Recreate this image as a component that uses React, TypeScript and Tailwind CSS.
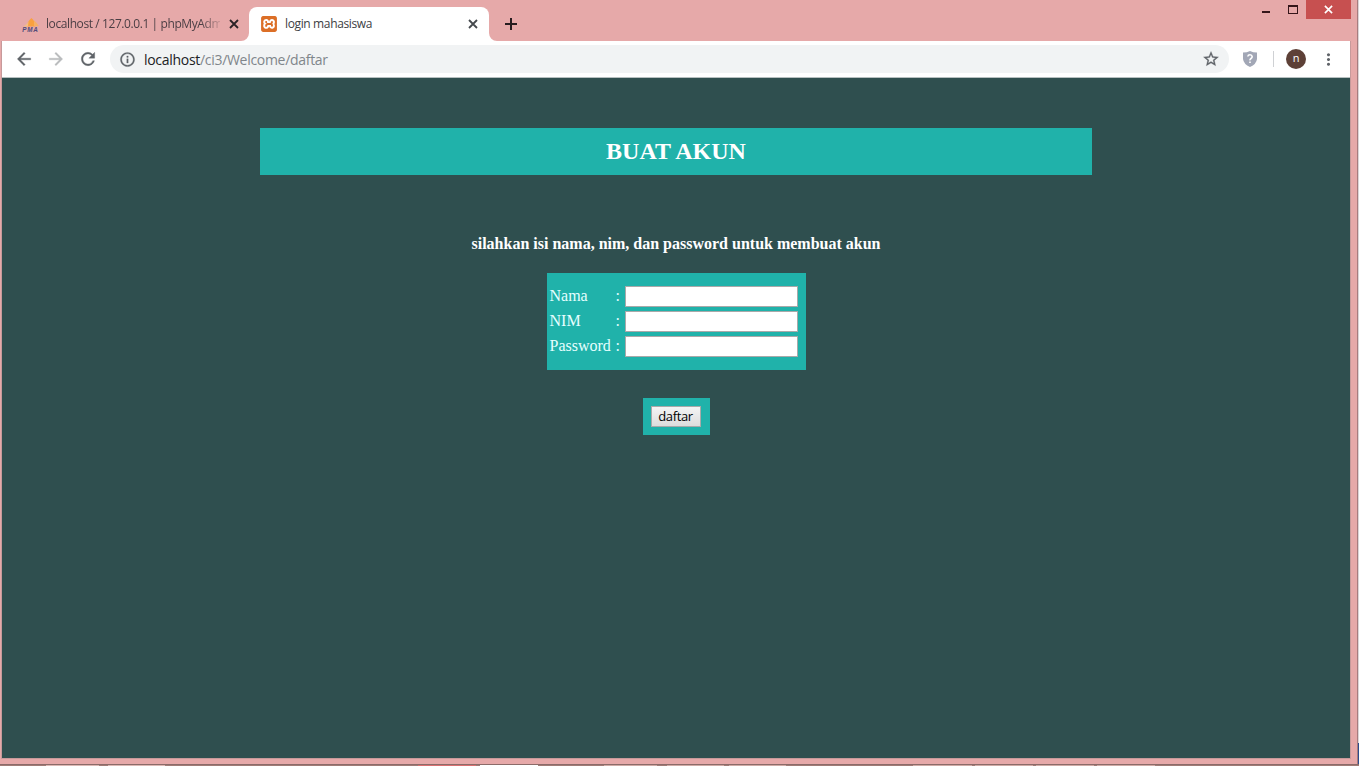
import { SiXampp } from "react-icons/si";
import { MdMoreVert } from "react-icons/md";

const glyphs = {
  back: "M20 11H7.83l5.59-5.59L12 4l-8 8 8 8 1.41-1.41L7.83 13H20v-2z",
  forward: "M12 4l-1.41 1.41L16.17 11H4v2h12.17l-5.58 5.59L12 20l8-8z",
  reload:
    "M17.65 6.35A7.958 7.958 0 0 0 12 4c-4.42 0-7.99 3.58-7.99 8s3.57 8 7.99 8c3.73 0 6.84-2.55 7.73-6h-2.08A5.99 5.99 0 0 1 12 18c-3.31 0-6-2.69-6-6s2.69-6 6-6c1.66 0 3.14.69 4.22 1.78L13 11h7V4l-2.35 2.35z",
  info: "M11 7h2v2h-2zm0 4h2v6h-2zm1-9C6.48 2 2 6.48 2 12s4.48 10 10 10 10-4.48 10-10S17.52 2 12 2zm0 18c-4.41 0-8-3.59-8-8s3.59-8 8-8 8 3.59 8 8-3.59 8-8 8z",
  star: "M22 9.24l-7.19-.62L12 2 9.19 8.63 2 9.24l5.46 4.73L5.82 21 12 17.27 18.18 21l-1.63-7.03L22 9.24zM12 15.4l-3.76 2.27 1-4.28-3.32-2.88 4.38-.38L12 6.1l1.71 4.04 4.38.38-3.32 2.88 1 4.28L12 15.4z",
};

function Glyph({ name, className }: { name: keyof typeof glyphs; className: string }) {
  return (
    <svg viewBox="0 0 24 24" className={className} fill="currentColor" stroke="currentColor" strokeWidth="0.4">
      <path d={glyphs[name]} />
    </svg>
  );
}

function CloseX({ className }: { className: string }) {
  return (
    <svg viewBox="0 0 10 10" className={className} fill="none" stroke="currentColor" strokeWidth="1.8">
      <path d="M1 1 9 9M9 1 1 9" />
    </svg>
  );
}

function PmaIcon() {
  return (
    <svg viewBox="0 0 17 16" className="h-4 w-[17px] shrink-0">
      <path d="M9.5 2C6.5 4.5 5 7.5 4.5 10.5H13C13.5 7 12 4 9.5 2Z" fill="#f9a13f" />
      <path d="M.8 10.5C3 9.8 5 8 6.5 5.5L6 10.5Z" fill="#f3bd86" />
      <path d="M12 4.5C14 6 15.7 8 16.8 10L12 10.5Z" fill="#f6b066" />
      <text x="0.3" y="16" fontFamily="Liberation Sans, sans-serif" fontSize="6.3" fontWeight="700" fontStyle="italic" fill="#4f4b78" textLength="15.5">PMA</text>
    </svg>
  );
}

function TitleBar() {
  return (
    <div className="flex h-[41px] items-start pl-[9px] text-[12px] text-[#4b3e44]">
      <div className="mt-[7px] flex h-[34px] w-[240px] items-center pl-[13px]">
        <PmaIcon />
        <span className="ml-[7px] w-[174px] overflow-hidden whitespace-nowrap tracking-[-0.41px] [mask-image:linear-gradient(to_right,black_155px,transparent_178px)]">
          localhost / 127.0.0.1 | phpMyAdmin
        </span>
        <CloseX className="ml-[9px] size-[10px] shrink-0 text-[#2b2226]" />
      </div>
      <div className="relative mt-[7px] flex h-[34px] w-[240px] items-center rounded-t-[8px] bg-white pl-3">
        <svg viewBox="0 0 8 8" className="absolute bottom-0 -left-2 size-2"><path d="M8 0V8H0A8 8 0 0 0 8 0" fill="white" /></svg>
        <svg viewBox="0 0 8 8" className="absolute -right-2 bottom-0 size-2"><path d="M0 0V8H8A8 8 0 0 1 0 0" fill="white" /></svg>
        <SiXampp className="size-4 rounded-[2px] text-[#dc6f27]" />
        <span className="ml-2 w-[176px] tracking-[-0.36px] text-[#3c4043]">login mahasiswa</span>
        <CloseX className="ml-[7px] size-[10px] text-[#45494d]" />
      </div>
      <svg viewBox="0 0 12 12" className="mt-[18px] ml-4 size-3" stroke="#271c1f" strokeWidth="2"><path d="M6 0V12M0 6H12" /></svg>
      <div className="ml-auto flex">
        <div className="mt-[11px] h-[2px] w-2 bg-[#35161a]" />
        <div className="mt-[5px] ml-[18px] h-[9px] w-[10px] border border-t-2 border-[#35161a]" />
        <div className="mr-[6px] ml-[8px] flex h-[19px] w-[45px] items-center justify-center bg-[#c75050]">
          <CloseX className="size-[9px] text-white" />
        </div>
      </div>
    </div>
  );
}

function Toolbar() {
  return (
    <div className="flex h-[37px] items-center border-b border-[#b7c0c0] bg-white pl-3 text-[#5f6368]">
      <Glyph name="back" className="size-5" />
      <Glyph name="forward" className="ml-3 size-5 text-[#b9bbbd]" />
      <Glyph name="reload" className="ml-3 size-5" />
      <div className="ml-3 flex h-7 w-[1119px] items-center rounded-full bg-[#f1f3f4] pr-[9px] pl-[9px]">
        <Glyph name="info" className="size-[17px]" />
        <span className="ml-2 text-[14px] tracking-[-0.3px] text-[#80868b]">
          <span className="text-[#202124]">localhost</span>/ci3/Welcome/daftar
        </span>
        <Glyph name="star" className="ml-auto size-[18px]" />
      </div>
      <svg viewBox="0 0 14 16" className="ml-[14px] h-4 w-[14px]">
        <path d="M7 0Q10 1.5 14 1.5V8Q13.5 13 7 16Q.5 13 0 8V1.5Q4 1.5 7 0Z" fill="#a2a7b6" />
        <path d="M4.8 5.5Q5 3.8 7 3.8T9.2 5.6Q9.2 6.7 8 7.5T7 9.3M7 10.5V12" fill="none" stroke="white" strokeWidth="1.6" />
      </svg>
      <div className="ml-4 h-4 w-px bg-[#cfd1d4]" />
      <div className="ml-3 flex size-5 items-center justify-center rounded-full bg-[#5d4037] pb-px text-[11px] text-white">n</div>
      <MdMoreVert className="ml-[13px] size-[19px]" />
    </div>
  );
}

function Page() {
  return (
    <main className="flex h-[680px] flex-col items-center bg-[#2f4f4f] pt-[50px] font-['Liberation_Serif',serif] text-white">
      <h2 className="h-[47px] w-[832px] bg-[#20b2aa] text-center text-[24px] leading-[47px] font-bold">BUAT AKUN</h2>
      <h4 className="mt-[60px] text-[16px] leading-[18px] font-bold">silahkan isi nama, nim, dan password untuk membuat akun</h4>
      <form className="mt-5 flex flex-col items-center">
        <div className="flex h-[97px] w-[259px] flex-col gap-1 bg-[#20b2aa] pt-[13px] pl-[3px] text-[16px] leading-[19px] text-[#e6ffff]">
          {["Nama", "NIM", "Password"].map((label) => (
            <label key={label} className="flex h-[21px]">
              <span className="w-[66px]">{label}</span>
              <span className="w-[9px]">:</span>
              <input className="h-[21px] w-[173px] border border-[#a9a9a9] bg-white px-1 text-[13px] text-black outline-none" />
            </label>
          ))}
        </div>
        <div className="mt-7 flex h-[37px] w-[67px] bg-[#20b2aa] pt-2 pl-2">
          <button type="button" className="h-[21px] w-[50px] border border-[#a9a9a9] bg-linear-to-b from-[#f4f4f4] to-[#dddddd] pb-px font-['Open_Sans',sans-serif] text-[13px] leading-[18px] tracking-[-0.35px] text-black">daftar</button>
        </div>
      </form>
    </main>
  );
}

export default function App() {
  return (
    <div className="flex h-[766px] w-[1359px] flex-col overflow-hidden bg-[#e6a9a9] font-['Open_Sans',sans-serif]">
      <div className="flex h-[764px]">
        <div className="flex w-[1357px] flex-col">
          <TitleBar />
          <div className="ml-px w-[1350px] border-x border-b border-[#c79a9b]">
            <Toolbar />
            <Page />
          </div>
        </div>
        <div className="w-px bg-[#a77c7e]" />
        <div className="flex w-px flex-col bg-[#dcd5d8]">
          <div className="mt-auto h-[21px] bg-[#2d4b8c]" />
        </div>
      </div>
      <div className="flex h-[2px] border-t border-[#8b6b69] bg-[#a07b76]">
        <div className="ml-[46px] h-px w-[53px] bg-[#dcb8b4]" />
        <div className="ml-[9px] h-px w-[57px] bg-[#dcb8b4]" />
        <div className="ml-[253px] h-px w-[58px] bg-[#d96f70]" />
        <div className="ml-[4px] h-px w-[58px] bg-white" />
        <div className="ml-[66px] h-px w-[53px] bg-[#cfaaa5]" />
        <div className="ml-[10px] h-px w-[57px] bg-[#cfaaa5]" />
        <div className="ml-[5px] h-px w-[57px] bg-[#cfaaa5]" />
        <div className="ml-[127px] h-px w-[59px] bg-[#cfaaa5]" />
        <div className="ml-[3px] h-px w-[58px] bg-[#cfaaa5]" />
        <div className="ml-[3px] h-px w-[58px] bg-[#cfaaa5]" />
        <div className="ml-[3px] h-px w-[58px] bg-[#cfaaa5]" />
      </div>
    </div>
  );
}
